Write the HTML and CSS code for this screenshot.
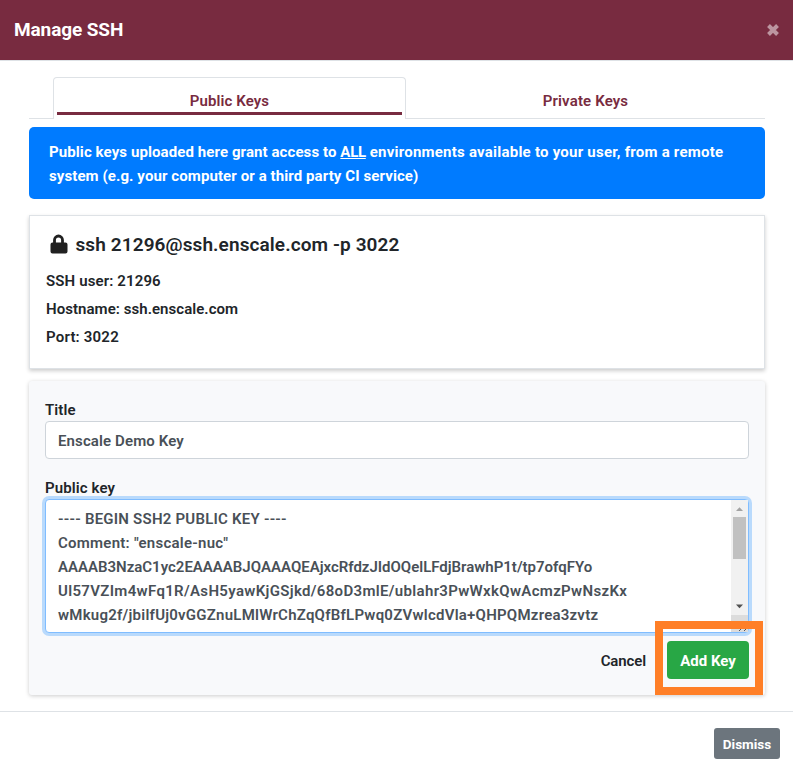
FILE: index.html
```html
<!DOCTYPE html>
<html lang="en">
<head>
<meta charset="utf-8">
<title>Manage SSH</title>
<link rel="stylesheet" href="styles.css">
</head>
<body>
<div class="modal">
  <header class="modal-header">
    <h1 class="modal-title"><span class="t-title">Manage SSH</span></h1>
    <button class="close" aria-label="Close"><svg width="12" height="12" viewBox="0 0 12 12"><path d="M1.5 1.5 10.5 10.5M10.5 1.5 1.5 10.5"/></svg></button>
  </header>
  <main class="modal-body">
    <nav class="tabs">
      <a class="tab active"><span class="t-tab1">Public Keys</span></a>
      <a class="tab"><span class="t-tab2">Private Keys</span></a>
    </nav>
    <div class="alert">
      <div class="t-alert1"><span class="t-lead">Public keys uploaded here grant access to </span><u>ALL</u> environments available to your user, from a remote</div>
      <div class="t-alert2">system (e.g. your computer or a third party CI service)</div>
    </div>
    <section class="card">
      <h2 class="ssh-command"><svg width="18" height="20" viewBox="0 0 18 20"><path d="M2 8.5h1.1V6a5.4 5.4 0 0 1 10.8 0v2.500H15.500q2 0 2 2v7q0 2-2 2h-13q-2 0-2-2v-7q0-2 2-2ZM5.900 8.500h5.200V6a2.600 2.600 0 0 0-5.200 0Z"/></svg><span class="t-cmd">ssh 21296@ssh.enscale.com -p 3022</span></h2>
      <p class="t-user">SSH user: 21296</p>
      <p class="t-host">Hostname: ssh.enscale.com</p>
      <p class="t-port">Port: 3022</p>
    </section>
    <section class="form">
      <div class="label"><span class="t-l1">Title</span></div>
      <div class="input"><span class="t-input">Enscale Demo Key</span></div>
      <div class="label"><span class="t-l2">Public key</span></div>
      <div class="textarea">
        <div class="key">
          <div class="t-k1">---- BEGIN SSH2 PUBLIC KEY ----</div>
          <div class="t-k2">Comment: "enscale-nuc"</div>
          <div class="t-k3">AAAAB3NzaC1yc2EAAAABJQAAAQEAjxcRfdzJIdOQelLFdjBrawhP1t/tp7ofqFYo</div>
          <div class="t-k4">Ul57VZIm4wFq1R/AsH5yawKjGSjkd/68oD3mlE/ublahr3PwWxkQwAcmzPwNszKx</div>
          <div class="t-k5">wMkug2f/jbilfUj0vGGZnuLMlWrChZqQfBfLPwq0ZVwlcdVla+QHPQMzrea3zvtz</div>
        </div>
        <div class="scrollbar">
          <svg class="arrow up" width="17" height="17" viewBox="0 0 17 17"><path d="M5 11 8.500 7.200 12 11Z"/></svg>
          <div class="thumb"></div>
          <svg class="arrow down" width="17" height="17" viewBox="0 0 17 17"><path d="M5 6.500 8.500 10.300 12 6.500Z"/></svg>
          <div class="corner"><svg width="17" height="17" viewBox="0 0 17 17"><path d="m8 16 2-2m3 2 2-2"/></svg></div>
        </div>
      </div>
      <div class="actions">
        <span class="cancel t-cancel">Cancel</span>
        <button class="add"><span class="t-add">Add Key</span><i class="highlight"></i></button>
      </div>
    </section>
  </main>
  <footer class="modal-footer"><button class="dismiss"><span class="t-dismiss">Dismiss</span></button></footer>
</div>
</body>
</html>
```
FILE: styles.css
```css
* { box-sizing: border-box; }
body {
  margin: 0;
  background: #fff;
  color: #212529;
  font: 600 15px/24px Roboto, sans-serif;
}
h1, h2, p { margin: 0; }
button { border: 0; padding: 0; font: inherit; color: #fff; }
svg { display: block; flex: none; }
.modal { height: 773px; overflow: hidden; white-space: nowrap; }
.modal-header {
  display: flex;
  justify-content: space-between;
  align-items: center;
  height: 61px;
  padding: 0 14px;
  background: #782b40;
  border-bottom: 1px solid #dee2e6;
}
.modal-title { font-size: 19px; font-weight: 700; line-height: 30px; color: #fff; }
.close { background: none; }
.close path { stroke: #bc95a0; stroke-width: 4; stroke-linecap: butt; }
.modal-body { padding: 16px 28px 0 29px; height: 650px; }
.tabs {
  display: grid;
  grid-template-columns: 353px 1fr;
  height: 42px;
  padding-left: 24px;
  border-bottom: 1px solid #dee2e6;
}
.tab { height: 42px; padding-top: 12px; text-align: center; color: #782b40; }
.tab.active {
  padding: 11px 3px 3px;
  background: linear-gradient(#782b40, #782b40) 3px 34px / 345px 3px no-repeat #fff;
  border: 1px solid #dee2e6;
  border-bottom: 0;
  border-radius: 4px 4px 0 0;
}
.alert {
  height: 72px;
  margin-top: 8px;
  padding: 13px 20px;
  border-radius: 5px;
  background: #007bff;
  color: #fff;
  font-weight: 700;
}
.alert > div, .card p, .key > div { width: max-content; }
.card {
  height: 154px;
  margin-top: 16px;
  padding: 16px;
  border: 1px solid #dee2e6;
  box-shadow: 0 2px 4px rgba(0, 0, 0, .2);
}
.ssh-command { display: flex; align-items: center; height: 26px; margin-bottom: 9px; font-size: 19px; font-weight: 600; }
.ssh-command svg { margin: -2px 7.5px 0 4px; }
.ssh-command path { fill: #212121; fill-rule: evenodd; }
.card p { line-height: 28px; }
.form {
  height: 314px;
  margin-top: 12px;
  padding: 17px 16px 0;
  border-radius: 3px;
  background: #f8f9fb;
  box-shadow: 0 1px 4px rgba(0, 0, 0, .2);
}
.label { height: 23px; }
.input {
  height: 38px;
  margin-bottom: 17px;
  padding: 7px 12px;
  border: 1px solid #ced4da;
  border-radius: 4px;
  background: #fff;
  color: #495057;
}
.textarea {
  display: flex;
  justify-content: space-between;
  height: 134px;
  border: 1px solid #80bdff;
  border-radius: 4px;
  background: #fff;
  color: #495057;
  box-shadow: 0 0 0 3px #b9dafc;
}
.key { padding: 7px 12px; }
.scrollbar { width: 17px; display: flex; flex-direction: column; background: #f1f1f1; }
.thumb { width: 13px; height: 42px; margin: 0 auto 39px 2px; background: #c1c1c1; }
.up path { fill: #a3a3a3; }
.down path { fill: #505050; }
.scrollbar .corner { margin-top: auto; background: #dcdcdc; }
.corner path { stroke: #555; stroke-width: 1; }
.actions { display: flex; justify-content: flex-end; align-items: center; height: 38px; margin-top: 8px; }
.cancel { margin-right: 21px; padding-top: 1px; }
.add { position: relative; width: 82px; height: 38px; padding-top: 1px; border-radius: 4px; background: #28a745; font-weight: 700; }
.highlight { position: absolute; left: -12px; top: -20px; width: 108px; height: 74px; border: 8px solid #ff7f27; }
.modal-footer {
  display: flex;
  justify-content: flex-end;
  height: 62px;
  padding: 16px 13px 0;
  border-top: 1px solid #dee2e6;
}
.dismiss { width: 66px; height: 31px; border-radius: 3px; background: #6c757d; font-size: 13.500px; font-weight: 700; }

/* Tracking */
.t-title { letter-spacing: -.1px; }
.t-tab1 { letter-spacing: .1px; }
.t-tab2 { letter-spacing: .15px; }
.t-alert1 { letter-spacing: .23px; }
.t-lead { letter-spacing: .09px; }
.t-alert1 u { letter-spacing: -.3px; }
.t-alert2 { letter-spacing: .09px; }
.t-cmd { letter-spacing: .1px; }
.t-user { letter-spacing: .13px; }
.t-host { letter-spacing: .05px; }
.t-port { letter-spacing: .2px; }
.t-l1, .t-l2, .t-input { letter-spacing: .12px; }
.t-k1 { letter-spacing: .23px; }
.t-k2 { letter-spacing: .25px; }
.t-k3 { letter-spacing: -.01px; }
.t-k4 { letter-spacing: .33px; }
.t-k5 { letter-spacing: .24px; }
.t-cancel { letter-spacing: -.12px; }
```
